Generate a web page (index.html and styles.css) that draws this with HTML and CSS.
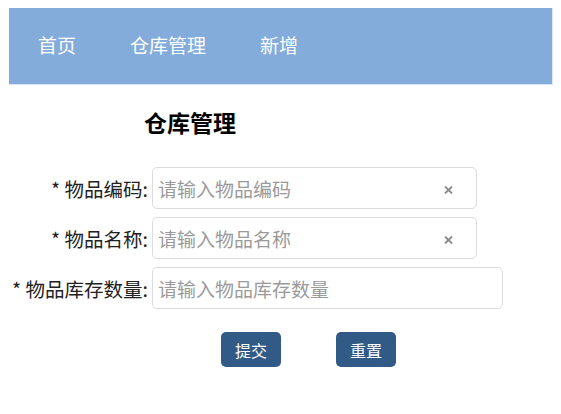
FILE: index.html
```html
<!DOCTYPE html>
<html lang="zh">
<head>
<meta charset="utf-8">
<title>仓库管理</title>
<link rel="stylesheet" href="styles.css">
</head>
<body>
<nav class="nav">
  <a class="nav-item">首页</a>
  <a class="nav-item">仓库管理</a>
  <a class="nav-item">新增</a>
</nav>
<h1 class="title">仓库管理</h1>
<form class="form">
  <div class="row">
    <label class="label">* 物品编码:</label>
    <div class="field field-short">
      <input class="input" placeholder="请输入物品编码">
      <svg class="clear" width="9" height="8" viewBox="0 0 9 8"><path d="M1 0.5 L8 7.5 M8 0.5 L1 7.5" stroke="#8a8a8a" stroke-width="1.8"/></svg>
    </div>
  </div>
  <div class="row">
    <label class="label">* 物品名称:</label>
    <div class="field field-short">
      <input class="input" placeholder="请输入物品名称">
      <svg class="clear" width="9" height="8" viewBox="0 0 9 8"><path d="M1 0.5 L8 7.5 M8 0.5 L1 7.5" stroke="#8a8a8a" stroke-width="1.8"/></svg>
    </div>
  </div>
  <div class="row">
    <label class="label">* 物品库存数量:</label>
    <div class="field field-long">
      <input class="input" placeholder="请输入物品库存数量">
    </div>
  </div>
  <div class="actions">
    <button type="button" class="btn">提交</button>
    <button type="button" class="btn">重置</button>
  </div>
</form>
</body>
</html>
```
FILE: styles.css
```css
body {
  margin: 8px;
  font-family: "Noto Sans CJK SC", "Noto Sans", sans-serif;
  background: #fff;
  color: #222;
}
.nav {
  height: 76px;
  margin-left: 1px;
  background: #83acdb;
  border-right: 1px solid #d9e6f4;
  border-bottom: 1px solid #d9e6f4;
  display: flex;
  align-items: center;
  gap: 54px;
  padding-left: 29px;
}
.nav-item {
  color: #fff;
  font-size: 19px;
  line-height: 24px;
  padding-bottom: 2px;
}
.title {
  margin: 22px 0 0 136px;
  font-size: 23px;
  line-height: 30px;
  font-weight: 700;
  color: #000;
}
.form {
  margin-top: 30px;
  display: flex;
  flex-direction: column;
  gap: 8px;
}
.row {
  display: flex;
  align-items: center;
  gap: 4px;
}
.label {
  width: 140px;
  text-align: right;
  font-size: 19.5px;
  color: #222;
  white-space: nowrap;
}
.field {
  height: 40px;
  border: 1px solid #dcdcdc;
  border-radius: 5px;
  display: flex;
  align-items: center;
  box-sizing: content-box;
}
.field-short { width: 323px; }
.field-long { width: 349px; }
.input {
  flex: 1;
  min-width: 0;
  border: none;
  outline: none;
  background: transparent;
  font-family: inherit;
  font-size: 19px;
  padding: 0 0 0 5px;
  color: #333;
}
.input::placeholder { color: #9a9a9a; }
.clear {
  margin-right: 23px;
  margin-top: 3px;
  flex: none;
}
.actions {
  margin: 15px 0 0 213px;
  display: flex;
  gap: 55px;
}
.btn {
  width: 60px;
  height: 35px;
  border: none;
  border-radius: 5px;
  background: #325a87;
  color: #fff;
  font-family: inherit;
  font-size: 16px;
  padding: 0;
}
```
